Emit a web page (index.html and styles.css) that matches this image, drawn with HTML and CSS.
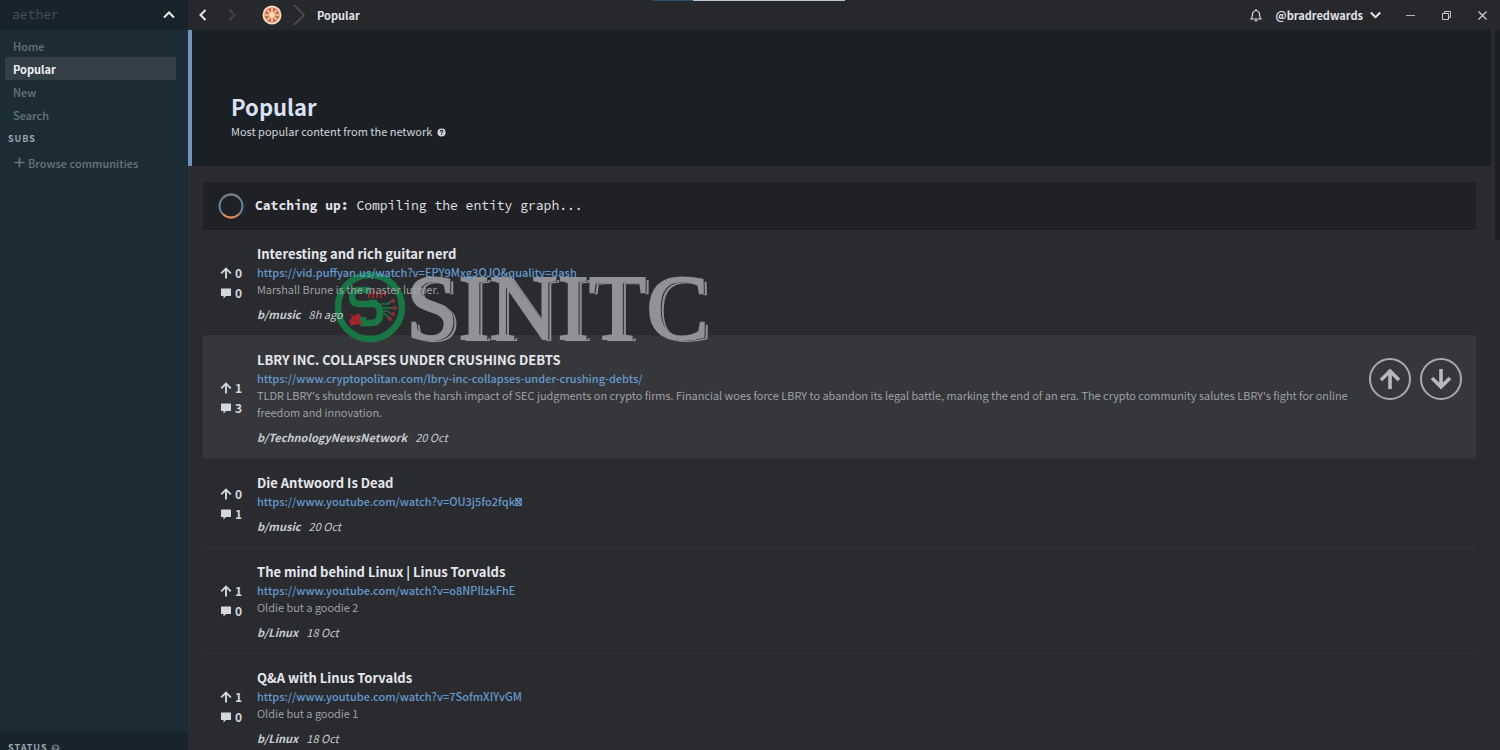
FILE: index.html
```html
<!DOCTYPE html>
<html lang="en">
<head>
<meta charset="utf-8">
<title>Aether – Popular</title>
<link rel="stylesheet" href="styles.css">
</head>
<body>
<svg width="0" height="0" class="defs" aria-hidden="true">
  <symbol id="up" viewBox="0 0 12 12"><path d="M6 11.5V1.5M1.2 6.300 6 1.500 10.800 6.300" fill="none" stroke="currentColor" stroke-width="1.900"/></symbol>
  <symbol id="talk" viewBox="0 0 12 12"><path d="M1.500 1.500h9q.5 0 .5.5v6.500q0 .5-.5.5H6L3.500 11.500V9h-2Q1 9 1 8.500V2q0-.5.5-.5z" fill="currentColor"/></symbol>
  <symbol id="help" viewBox="0 0 10 10"><circle cx="5" cy="5" r="4.500" fill="currentColor"/><path d="M3.500 4Q3.600 2.600 5 2.600T6.500 3.900Q6.500 4.600 5.500 5 5 5.300 5 6M5 6.700V7.900" fill="none" stroke="#1b2126" stroke-width="1.200"/></symbol>
</svg>
<div class="app">
  <aside class="sidebar">
    <div class="brand"><span>aether</span>
      <button class="plain" aria-label="Collapse"><svg width="12" height="8" viewBox="0 0 12 8"><path d="M1 6.500 6 1.500l5 5" fill="none" stroke="#e6eaee" stroke-width="2"/></svg></button>
    </div>
    <nav class="nav">
      <a href="#home">Home</a>
      <a href="#popular" class="active">Popular</a>
      <a href="#new">New</a>
      <a href="#search">Search</a>
      <h2>SUBS</h2>
      <a href="#browse"><svg width="11" height="11" viewBox="0 0 11 11"><path d="M5.500 .5v10M.5 5.500h10" stroke="currentColor" stroke-width="1.600"/></svg> Browse communities</a>
    </nav>
    <div class="status">STATUS <svg width="9" height="9"><use href="#help"/></svg></div>
  </aside>
  <div class="content">
    <header class="topbar">
      <button class="plain" aria-label="Back"><svg width="8" height="12" viewBox="0 0 8 12"><path d="M6.500 1 1.500 6l5 5" fill="none" stroke="#e6e8ec" stroke-width="2"/></svg></button>
      <button class="plain forward" aria-label="Forward"><svg width="8" height="12" viewBox="0 0 8 12"><path d="M1.500 1l5 5-5 5" fill="none" stroke="#42454b" stroke-width="1.800"/></svg></button>
      <svg class="logo" width="20" height="20" viewBox="0 0 20 20"><circle cx="10" cy="10" r="9.500" fill="#f3dcc2"/><circle cx="10" cy="10" r="7.500" fill="#d4664c"/><path d="M10 3v14M3 10h14M5 5l10 10M15 5 5 15" stroke="#f6d2a8" stroke-width="1.700"/><circle cx="10" cy="10" r="2.500" fill="#f8e0bd"/></svg>
      <svg class="sep" width="12" height="20" viewBox="0 0 12 20"><path d="M1 0l10 10L1 20" fill="none" stroke="#50535a" stroke-width="1.500"/></svg>
      <span class="crumb">Popular</span>
      <span class="progress"></span>
      <div class="tools">
        <button class="plain" aria-label="Notifications"><svg width="12" height="13" viewBox="0 0 12 13"><path d="M1 10Q2.500 8.500 2.500 5.500 2.500 2 6 1.500 9.500 2 9.500 5.500 9.500 8.500 11 10zM6 0v1.500M4.700 11.200q1.300 1.600 2.600 0" fill="none" stroke="#d8dade" stroke-width="1.200"/></svg></button>
        <button class="plain user">@bradredwards <svg width="11" height="8" viewBox="0 0 11 8"><path d="M.8 1.500 5.500 6.200l4.700-4.700" fill="none" stroke="#e6e8ec" stroke-width="2"/></svg></button>
        <button class="plain win" aria-label="Minimize"><svg width="9" height="9"><path d="M0 4.500h9" stroke="#b4b6ba"/></svg></button>
        <button class="plain win" aria-label="Restore"><svg width="9" height="9" viewBox="0 0 9 9"><path d="M.5 2.500h6v6h-6zM2.500 2.500v-2h6v6h-2" fill="none" stroke="#c4c6ca"/></svg></button>
        <button class="plain win" aria-label="Close"><svg width="9" height="9" viewBox="0 0 9 9"><path d="M.5.5l8 8M8.500.5l-8 8" stroke="#d0d2d6" stroke-width="1.100"/></svg></button>
      </div>
    </header>
    <main class="main">
      <section class="hero">
        <h1>Popular</h1>
        <p>Most popular content from the network <svg width="9" height="9"><use href="#help"/></svg></p>
      </section>
      <div class="feed">
        <div class="catchup">
          <svg width="26" height="26" viewBox="0 0 26 26" fill="none" stroke-width="2"><circle cx="13" cy="13" r="11.500" stroke="#62839f"/><path d="M4.900 4.900a11.500 11.500 0 0 1 16.200 0" stroke="#777b82"/><path d="M4.900 21.100a11.500 11.500 0 0 0 16.200 0" stroke="#e3854f"/></svg>
          <p><b>Catching up:</b> Compiling the entity graph...</p>
        </div>
        <article class="post">
          <div class="counts"><span><svg width="12" height="12"><use href="#up"/></svg>0</span><span><svg width="12" height="12"><use href="#talk"/></svg>0</span></div>
          <div class="body"><h3>Interesting and rich guitar nerd</h3><a class="link" href="#p1">https://vid.puffyan.us/watch?v=EPY9Mxg3OJQ&amp;quality=dash</a><p>Marshall Brune is the master luthier.</p><div class="meta"><b>b/music</b><span>8h ago</span></div></div>
          <div class="watermark">
            <svg width="72" height="72" viewBox="0 0 72 72"><circle cx="36" cy="36" r="32" fill="none" stroke="#187644" stroke-width="6.500"/><path d="M36 19H25q-7 0-7 7t7 7h13q8 0 8 9 0 10-9 10H29v-6M43 32h-8" fill="none" stroke="#187644" stroke-width="6.500"/><path d="M35 27v-5M39 27v-8M43 27v-6M47 27v-8M51 25v-5" stroke="#a5252f" stroke-width="1.800"/><path d="M16 43l5 2 3-3 3 3-1 4 3 5-6-1-6 2-2-5 3-3z" fill="#a5252f"/><g fill="#a5252f"><circle cx="59" cy="30" r="2"/><circle cx="61" cy="37" r="2"/><circle cx="59" cy="43" r="2"/><circle cx="56" cy="48" r="2"/></g><path d="M47 33h7l3-3M47 37h12M47 40h6l4 3M47 43h4l4 4" stroke="#187644" stroke-width="1.500" fill="none"/></svg>
            <span>SINITC</span>
          </div>
        </article>
        <article class="post hover">
          <div class="counts"><span><svg width="12" height="12"><use href="#up"/></svg>1</span><span><svg width="12" height="12"><use href="#talk"/></svg>3</span></div>
          <div class="body"><h3>LBRY INC. COLLAPSES UNDER CRUSHING DEBTS</h3><a class="link" href="#p2">https://www.cryptopolitan.com/lbry-inc-collapses-under-crushing-debts/</a><p>TLDR LBRY's shutdown reveals the harsh impact of SEC judgments on crypto firms. Financial woes force LBRY to abandon its legal battle, marking the end of an era. The crypto community salutes LBRY's fight for online freedom and innovation.</p><div class="meta"><b>b/TechnologyNewsNetwork</b><span>20 Oct</span></div></div>
          <div class="votes">
            <button aria-label="Upvote"><svg width="22" height="22" viewBox="0 0 22 22"><path d="M11 21V3M2 12l9-9 9 9" fill="none" stroke="currentColor" stroke-width="3.600"/></svg></button>
            <button aria-label="Downvote"><svg width="22" height="22" viewBox="0 0 22 22"><path d="M11 1v18M2 10l9 9 9-9" fill="none" stroke="currentColor" stroke-width="3.600"/></svg></button>
          </div>
        </article>
        <article class="post">
          <div class="counts"><span><svg width="12" height="12"><use href="#up"/></svg>0</span><span><svg width="12" height="12"><use href="#talk"/></svg>1</span></div>
          <div class="body"><h3>Die Antwoord Is Dead</h3><a class="link" href="#p3">https://www.youtube.com/watch?v=OU3j5fo2fqk<svg class="tofu" width="7" height="8" viewBox="0 0 7 9"><path d="M.5.5h6v8h-6zM.5.5l6 8M6.500.5l-6 8" fill="none" stroke="currentColor" stroke-width="1.300"/></svg></a><div class="meta"><b>b/music</b><span>20 Oct</span></div></div>
        </article>
        <article class="post">
          <div class="counts"><span><svg width="12" height="12"><use href="#up"/></svg>1</span><span><svg width="12" height="12"><use href="#talk"/></svg>0</span></div>
          <div class="body"><h3>The mind behind Linux | Linus Torvalds</h3><a class="link" href="#p4">https://www.youtube.com/watch?v=o8NPllzkFhE</a><p>Oldie but a goodie 2</p><div class="meta"><b>b/Linux</b><span>18 Oct</span></div></div>
        </article>
        <article class="post">
          <div class="counts"><span><svg width="12" height="12"><use href="#up"/></svg>1</span><span><svg width="12" height="12"><use href="#talk"/></svg>0</span></div>
          <div class="body"><h3>Q&amp;A with Linus Torvalds</h3><a class="link" href="#p5">https://www.youtube.com/watch?v=7SofmXIYvGM</a><p>Oldie but a goodie 1</p><div class="meta"><b>b/Linux</b><span>18 Oct</span></div></div>
        </article>
      </div>
      <div class="scrollbar"></div>
    </main>
  </div>
</div>
</body>
</html>
```
FILE: styles.css
```css
* { box-sizing: border-box; }
body { margin: 0; background: #2a2b2f; color: #e2e4ea; font: 11px/18px "Noto Sans CJK SC", "Noto Sans", sans-serif; }
h1, h2, h3, p { margin: 0; }
a { text-decoration: none; color: inherit; }
.defs { position: absolute; }
.plain { display: flex; align-items: center; background: none; border: 0; padding: 0; color: inherit; font: inherit; }
.app { display: grid; grid-template-columns: 188px 1fr; height: 100vh; overflow: hidden; }

.sidebar { display: flex; flex-direction: column; min-height: 0; background: #1c2c34; }
.brand { display: flex; justify-content: space-between; align-items: center; height: 30px; padding: 0 13px 0 12px; background: #17242c; color: #43515a; }
.brand span { font-family: "Source Code Pro", "DejaVu Sans Mono", monospace; font-size: 13px; }
.nav { flex: 1; padding: 4px 12px 0 5px; color: #66757e; font-weight: 500; }
.nav a { display: flex; align-items: center; gap: 3px; height: 23px; padding: 0 8px; }
.nav a:last-child { padding-left: 9px; }
.nav .active { background: #333f47; color: #f0f2f5; font-weight: 700; }
.nav h2 { padding-left: 3px; font-size: 9px; line-height: 25px; letter-spacing: 1px; color: #9aa7b0; }
.status { display: flex; align-items: center; gap: 3px; flex: none; height: 18px; padding: 14px 8px 0; overflow: hidden; background: #17242c; color: #9aa7b0; font-size: 9px; font-weight: 700; letter-spacing: 1px; }
.status svg { flex: none; color: #60717b; }

.content { display: flex; flex-direction: column; min-width: 0; min-height: 0; }
.topbar { position: relative; display: flex; align-items: center; flex: none; height: 30px; padding: 0 13px 0 11px; background: #27282c; font-weight: 700; }
.forward { margin-left: 21px; }
.logo { margin-left: 26px; }
.sep { margin: 0 12px 0 11px; }
.progress { position: absolute; top: 0; left: calc(50% - 191px); width: 192px; height: 1px; background: linear-gradient(90deg, #235274 21%, #bcc6cc 21%); }
.tools { display: flex; align-items: center; margin-left: auto; }
.user { gap: 7px; margin: 0 25px 0 14px; }
.win + .win { margin-left: 27px; }

.main { position: relative; flex: 1; min-height: 0; overflow: hidden; }
.hero { height: 136px; margin-right: 9px; padding: 60px 39px 0; border-left: 4px solid #6f94bd; background: #1b2024; }
.hero h1 { font-size: 22px; line-height: 32px; color: #dbe1f3; }
.hero p { color: #d2d5dd; }
.hero svg { margin-left: 2px; vertical-align: -1px; }
.feed { isolation: isolate; padding: 16px 24px 0 15px; }
.catchup { display: flex; align-items: center; gap: 11px; height: 48px; padding-left: 15px; background: #202125; font: 13px/18px "Source Code Pro", "DejaVu Sans Mono", monospace; }

.post { position: relative; display: flex; padding: 14px 14px 13px 17px; border-bottom: 1px solid #323338; }
.hover { background: #36373b; }
.counts { display: flex; flex-direction: column; justify-content: center; width: 37px; flex: none; font-size: 12px; font-weight: 700; line-height: 20px; color: #d5d7dc; }
.counts span { display: flex; align-items: center; gap: 3px; }
.body { position: relative; z-index: 2; flex: 1; min-width: 0; }
.body h3 { font-size: 13px; line-height: 19px; color: #e5e7ed; }
.link { display: block; color: #6599ce; font-weight: 500; }
.body p { line-height: 17px; color: #a6a8ad; font-weight: 350; }
.meta { display: flex; gap: 8px; margin-top: 8px; line-height: 16px; font-style: italic; color: #c8cad0; }
.votes { display: flex; gap: 9px; margin: 8px 0 0 4px; }
.votes button { display: grid; place-items: center; width: 42px; height: 42px; padding: 0; border: 2px solid #a9aaad; border-radius: 50%; background: none; color: #b7b8bb; }
.watermark { position: absolute; z-index: 1; left: 131px; top: 41px; display: flex; align-items: center; height: 72px; pointer-events: none; }
.watermark span { font: 94px/72px "Liberation Serif", serif; color: #919295; -webkit-text-stroke: 2px #919295; text-shadow: 2px 1px #2a2b2f, 4px 2px #919295; }
.scrollbar { position: absolute; top: 0; right: 0; width: 5px; height: 210px; background: #1e1f22; }
```
